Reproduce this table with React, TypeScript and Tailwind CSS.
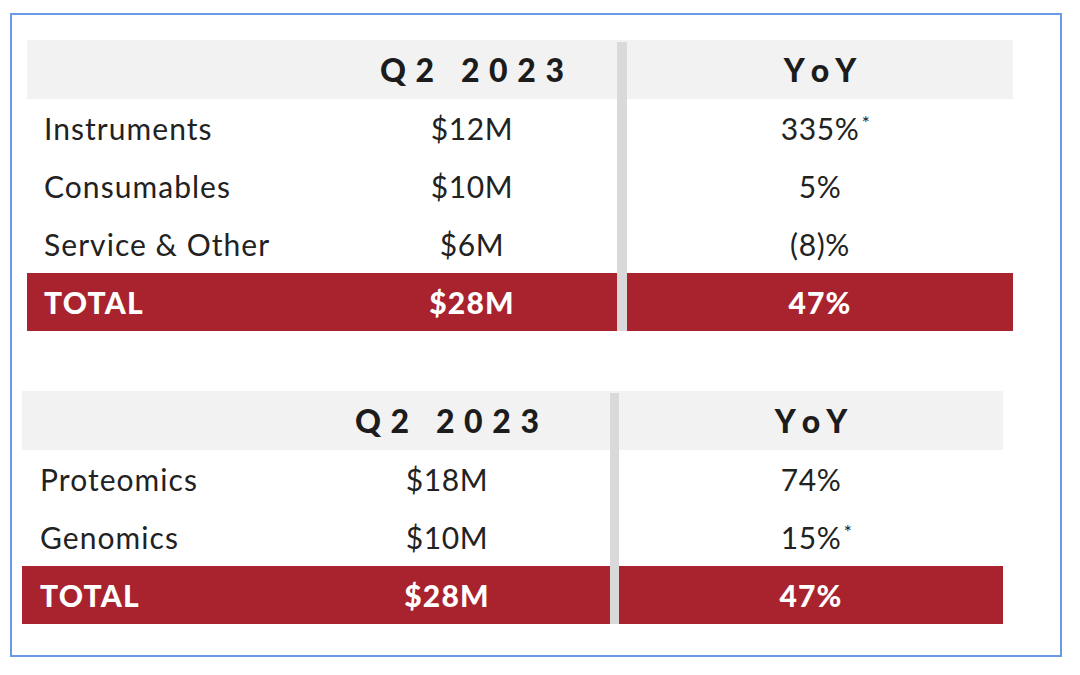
import React from 'react';

type Row = { label: string; value: string; yoy: string; star?: boolean };

type TableProps = {
  rows: Row[];
  total: { value: string; yoy: string };
  cols: string;
  width: string;
  labelPad: string;
};

const font = { fontFamily: 'Lato, "Open Sans", sans-serif' };

const RevenueTable: React.FC<TableProps> = ({ rows, total, cols, width, labelPad }) => {
  return (
    <div className={`${width} flex flex-col`} style={font}>
      {/* header */}
      <div className={`grid ${cols} h-[59px] bg-[#f2f2f2]`}>
        <div />
        <div className="flex items-center justify-center text-[32px] font-black tracking-[0.3em] text-[#1c1c1c] pl-[0.3em]">
          Q2 2023
        </div>
        <div className="mt-[2px] bg-[#d9d9d9]" />
        <div className="flex items-center justify-center text-[32px] font-black tracking-[0.3em] text-[#1c1c1c] pl-[0.3em]">
          YoY
        </div>
      </div>

      {rows.map((r) => (
        <div key={r.label} className={`grid ${cols} h-[58px] bg-white`}>
          <div className={`flex items-center ${labelPad} text-[30px] tracking-[0.035em] text-[#222]`}>{r.label}</div>
          <div className="flex items-center justify-center text-[30px] tracking-[0.02em] text-[#222]">{r.value}</div>
          <div className="bg-[#d9d9d9]" />
          <div className="flex items-center justify-center text-[30px] tracking-[0.02em] text-[#222]">
            <span className="relative">
              {r.yoy}
              {r.star && <span className="absolute -right-[11px] top-[7px] text-[19px] leading-none">*</span>}
            </span>
          </div>
        </div>
      ))}

      {/* total */}
      <div className={`grid ${cols} h-[58px] bg-[#a8232e]`}>
        <div className={`flex items-center ${labelPad} text-[30px] font-black tracking-[0.04em] text-white`}>TOTAL</div>
        <div className="flex items-center justify-center text-[30px] font-black tracking-[0.04em] text-white">{total.value}</div>
        <div className="bg-[#d9d9d9]" />
        <div className="flex items-center justify-center text-[30px] font-black tracking-[0.04em] text-white">{total.yoy}</div>
      </div>
    </div>
  );
};

const App: React.FC = () => {
  return (
    <div className="w-[1080px] h-[675px] bg-white pt-[13px] pl-[10px]">
      <div className="w-[1052px] h-[644px] border-2 border-[#6a9ae6] flex flex-col">
        <div className="ml-[15px] mt-[25px]">
          <RevenueTable
            width="w-[986px]"
            cols="grid-cols-[300px_290px_10px_386px]"
            labelPad="pl-[17px]"
            rows={[
              { label: 'Instruments', value: '$12M', yoy: '335%', star: true },
              { label: 'Consumables', value: '$10M', yoy: '5%' },
              { label: 'Service & Other', value: '$6M', yoy: '(8)%' },
            ]}
            total={{ value: '$28M', yoy: '47%' }}
          />
        </div>

        <div className="ml-[10px] mt-[60px]">
          <RevenueTable
            width="w-[981px]"
            cols="grid-cols-[262px_326px_9px_384px]"
            labelPad="pl-[18px]"
            rows={[
              { label: 'Proteomics', value: '$18M', yoy: '74%' },
              { label: 'Genomics', value: '$10M', yoy: '15%', star: true },
            ]}
            total={{ value: '$28M', yoy: '47%' }}
          />
        </div>
      </div>
    </div>
  );
};

export default App;
